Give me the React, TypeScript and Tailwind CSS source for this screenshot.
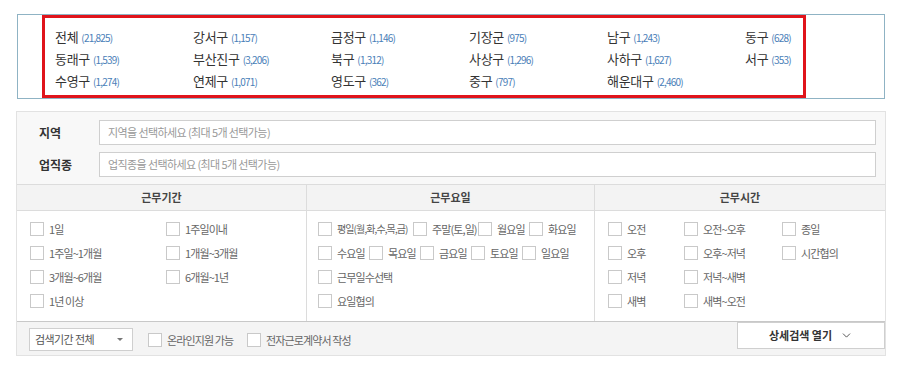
import { ChevronDown } from "lucide-react";

const regions: [string, string][] = [
  ["전체", "21,825"],
  ["강서구", "1,157"],
  ["금정구", "1,146"],
  ["기장군", "975"],
  ["남구", "1,243"],
  ["동구", "628"],
  ["동래구", "1,539"],
  ["부산진구", "3,206"],
  ["북구", "1,312"],
  ["사상구", "1,296"],
  ["사하구", "1,627"],
  ["서구", "353"],
  ["수영구", "1,274"],
  ["연제구", "1,071"],
  ["영도구", "362"],
  ["중구", "797"],
  ["해운대구", "2,460"],
];

const font = { fontFamily: '"Noto Sans CJK KR", "Noto Sans", sans-serif' };

function Check({ label, className, small }: { label: string; className?: string; small?: boolean }) {
  return (
    <label className={"flex items-center gap-[5px] whitespace-nowrap text-[#666] " + (small ? "text-[10px] " : "text-[11px] ") + (className ?? "")}>
      <span className="h-[14px] w-[14px] shrink-0 border border-[#c9c9c9] bg-white" />
      <span className="leading-[14px] tracking-[-0.9px]">{label}</span>
    </label>
  );
}

function FieldRow({ label, placeholder }: { label: string; placeholder: string }) {
  return (
    <div className="flex items-center">
      <div className="w-[82px] pl-[22px] text-[12px] font-bold text-[#333]">{label}</div>
      <div className="flex h-[25px] flex-1 items-center border border-[#cfcfcf] bg-white pl-[8px] text-[11px] tracking-[-0.6px] text-[#999]">
        {placeholder}
      </div>
    </div>
  );
}

export default function App() {
  return (
    <div className="h-[367px] w-[901px] bg-white pt-[14px]" style={font}>
      <div className="ml-[17px] h-[85px] w-[868px] border border-[#8fb3c4]">
        <div className="ml-[24px] grid h-[83px] w-[764px] grid-cols-[repeat(6,138px)] content-start border-[3px] border-[#e0141b] pl-[10px] pt-[8px]">
          {regions.map(([name, count]) => (
            <div key={name} className="flex h-[22px] items-center whitespace-nowrap">
              <span className="text-[13px] tracking-[-0.3px] text-[#333]">{name}</span>
              <span className="ml-[3px] text-[10px] tracking-[-0.8px] text-[#4a80b8]">({count})</span>
            </div>
          ))}
        </div>
      </div>

      <div className="ml-[16px] mt-[12px] w-[870px] border border-[#e2e2e2] bg-[#f8f8f8]">
        <div className="flex flex-col gap-[7px] pb-[7px] pr-[9px] pt-[8px]">
          <FieldRow label="지역" placeholder="지역을 선택하세요 (최대 5개 선택가능)" />
          <FieldRow label="업직종" placeholder="업직종을 선택하세요 (최대 5개 선택가능)" />
        </div>

        <div className="grid grid-cols-[290px_288px_1fr] border-t border-[#dcdcdc]">
          <div className="flex h-[26px] items-center justify-center border-b border-r border-[#dcdcdc] bg-[#f3f3f3] text-[11px] font-bold text-[#444]">근무기간</div>
          <div className="flex h-[26px] items-center justify-center border-b border-r border-[#dcdcdc] bg-[#f3f3f3] text-[11px] font-bold text-[#444]">근무요일</div>
          <div className="flex h-[26px] items-center justify-center border-b border-[#dcdcdc] bg-[#f3f3f3] text-[11px] font-bold text-[#444]">근무시간</div>

          <div className="grid h-[110px] grid-cols-[136px_1fr] content-start gap-y-[10px] border-r border-[#dcdcdc] bg-white pl-[13px] pt-[11px]">
            <Check label="1일" />
            <Check label="1주일이내" />
            <Check label="1주일~1개월" />
            <Check label="1개월~3개월" />
            <Check label="3개월~6개월" />
            <Check label="6개월~1년" />
            <Check label="1년 이상" />
          </div>

          <div className="flex h-[110px] flex-col gap-[10px] border-r border-[#dcdcdc] bg-white pl-[11px] pt-[11px]">
            <div className="grid grid-cols-[95px_65px_51px_1fr]">
              <Check label="평일(월,화,수,목,금)" small />
              <Check label="주말(토,일)" />
              <Check label="월요일" />
              <Check label="화요일" />
            </div>
            <div className="grid grid-cols-[51px_51px_51px_51px_1fr]">
              <Check label="수요일" />
              <Check label="목요일" />
              <Check label="금요일" />
              <Check label="토요일" />
              <Check label="일요일" />
            </div>
            <Check label="근무일수선택" />
            <Check label="요일협의" />
          </div>

          <div className="grid h-[110px] grid-cols-[76px_98px_1fr] content-start gap-y-[10px] bg-white pl-[13px] pt-[11px]">
            <Check label="오전" />
            <Check label="오전~오후" />
            <Check label="종일" />
            <Check label="오후" />
            <Check label="오후~저녁" />
            <Check label="시간협의" />
            <Check label="저녁" />
            <Check label="저녁~새벽" />
            <span />
            <Check label="새벽" />
            <Check label="새벽~오전" />
          </div>
        </div>

        <div className="flex h-[34px] items-start border-t border-[#c8c8c8] bg-[#f4f4f4]">
          <div className="ml-[12px] mt-[6px] flex h-[23px] w-[104px] items-center justify-between border border-[#cfcfcf] bg-white pl-[5px] pr-[9px] text-[11px] text-[#555]">
            <span className="tracking-[-0.6px]">검색기간 전체</span>
            <span className="h-0 w-0 border-x-[3px] border-t-[3px] border-x-transparent border-t-[#777]" />
          </div>
          <Check label="온라인지원 가능" className="ml-[15px] mt-[11px]" />
          <Check label="전자근로계약서 작성" className="ml-[14px] mt-[11px]" />
          <div className="ml-auto flex h-[27px] w-[148px] items-center justify-center gap-[8px] border border-[#cfcfcf] bg-white text-[11px] font-bold text-[#333]">
            <span>상세검색 열기</span>
            <ChevronDown size={13} strokeWidth={1.5} />
          </div>
        </div>
      </div>
    </div>
  );
}
